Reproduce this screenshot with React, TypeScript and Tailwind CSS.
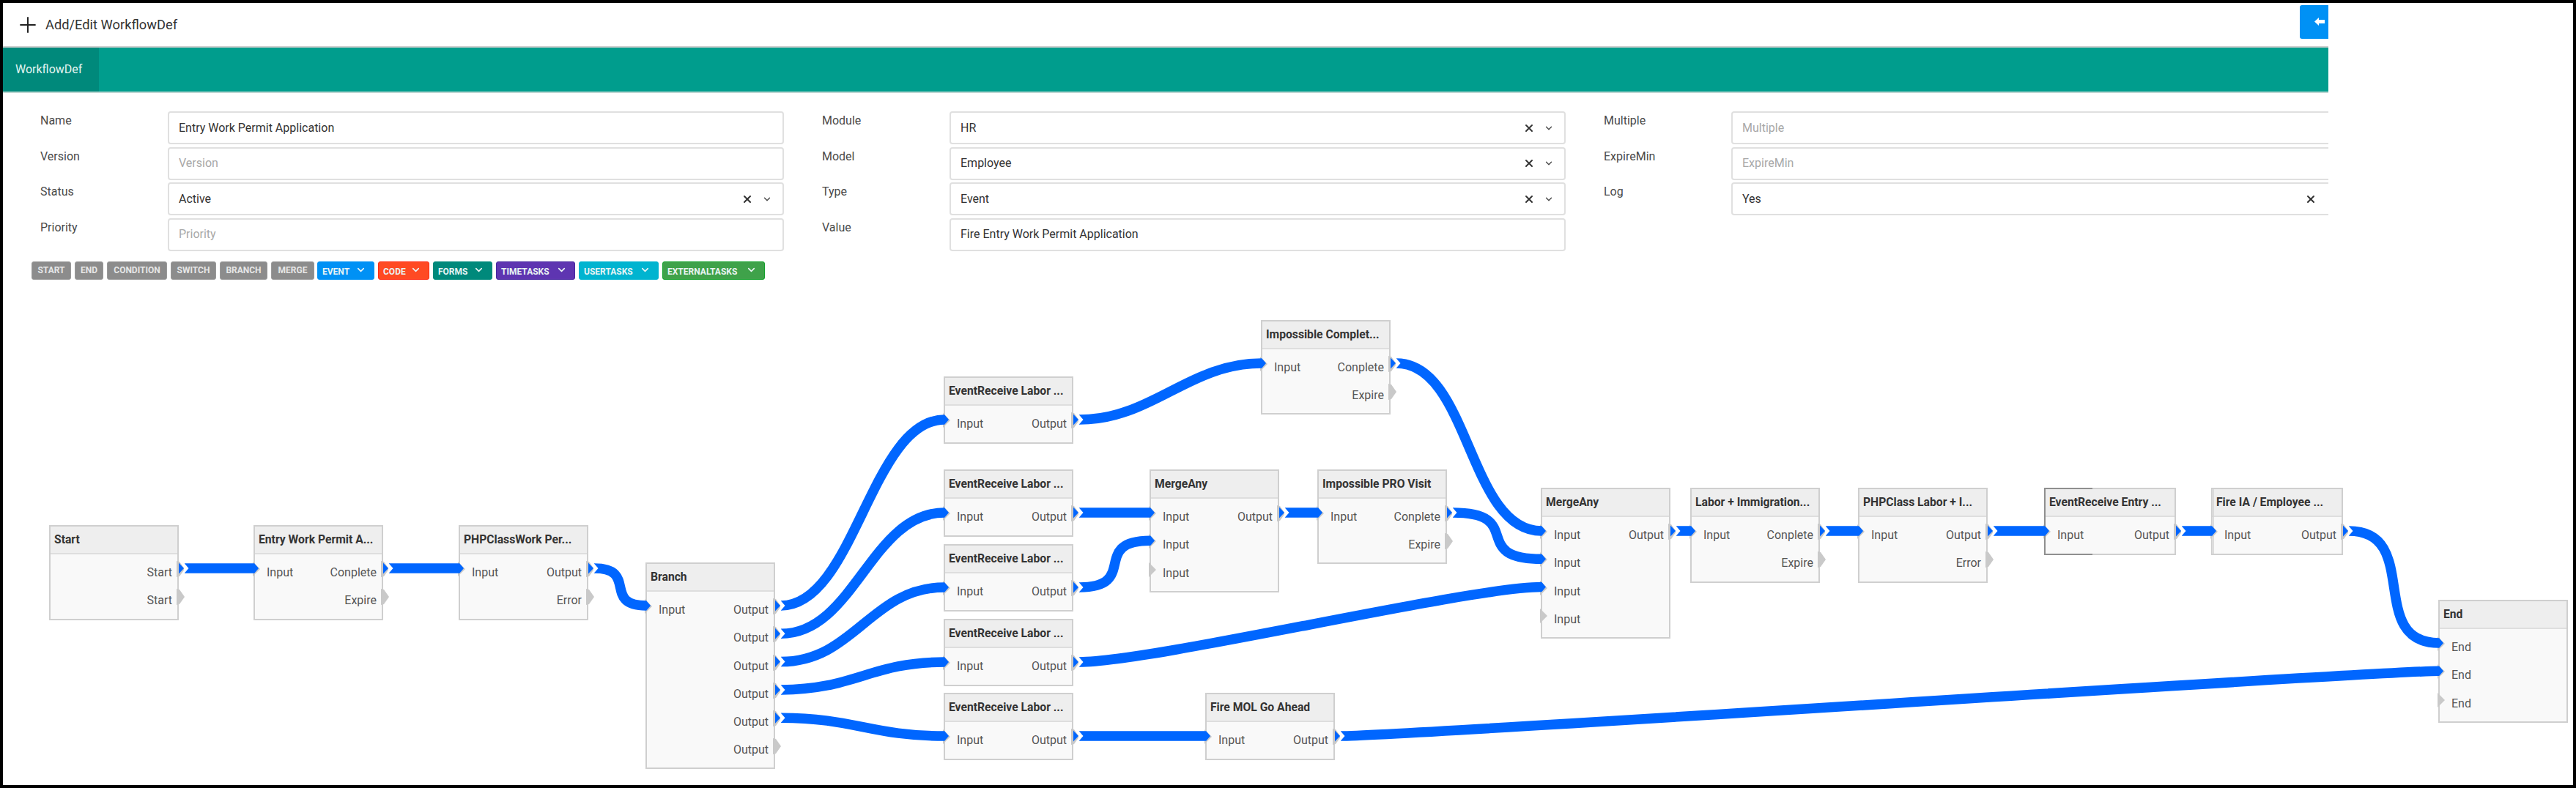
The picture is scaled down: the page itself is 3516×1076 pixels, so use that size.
import { ChevronDown, Plus, X } from "lucide-react";

type N = { id: string; t: string; x: number; y: number; w: number; h: number; i: string[]; o: string[]; sel?: boolean; dbl?: boolean };

const rowH = 38.3;
const canvasY = 400;
const canvasX = 4;

const ev = (id: string, y: number): N => ({ id, t: "EventReceive Labor ...", x: 1288, y, w: 177, h: 92, i: ["Input"], o: ["Output"] });

const nodes: N[] = [
  { id: "start", t: "Start", x: 67, y: 717, w: 177, h: 130, i: [], o: ["Start", "Start"] },
  { id: "entry", t: "Entry Work Permit A...", x: 346, y: 717, w: 177, h: 130, i: ["Input"], o: ["Conplete", "Expire"] },
  { id: "php", t: "PHPClassWork Per...", x: 626, y: 717, w: 177, h: 130, i: ["Input"], o: ["Output", "Error"] },
  { id: "branch", t: "Branch", x: 881, y: 768, w: 177, h: 282, i: ["Input"], o: ["Output", "Output", "Output", "Output", "Output", "Output"] },
  ev("e1", 514),
  ev("e2", 641),
  ev("e3", 743),
  ev("e4", 845),
  ev("e5", 946),
  { id: "ic", t: "Impossible Complet...", x: 1721, y: 437, w: 177, h: 129, i: ["Input"], o: ["Conplete", "Expire"] },
  { id: "m1", t: "MergeAny", x: 1569, y: 641, w: 177, h: 168, i: ["Input", "Input", "Input"], o: ["Output"] },
  { id: "pro", t: "Impossible PRO Visit", x: 1798, y: 641, w: 177, h: 129, i: ["Input"], o: ["Conplete", "Expire"] },
  { id: "mol", t: "Fire MOL Go Ahead", x: 1645, y: 946, w: 177, h: 92, i: ["Input"], o: ["Output"] },
  { id: "m2", t: "MergeAny", x: 2103, y: 666, w: 177, h: 206, i: ["Input", "Input", "Input", "Input"], o: ["Output"] },
  { id: "labor", t: "Labor + Immigration...", x: 2307, y: 666, w: 177, h: 130, i: ["Input"], o: ["Conplete", "Expire"] },
  { id: "phpl", t: "PHPClass Labor + I...", x: 2536, y: 666, w: 177, h: 130, i: ["Input"], o: ["Output", "Error"] },
  { id: "eve", t: "EventReceive Entry ...", x: 2790, y: 666, w: 180, h: 92, i: ["Input"], o: ["Output"], sel: true },
  { id: "fia", t: "Fire IA / Employee ...", x: 3018, y: 666, w: 180, h: 92, i: ["Input"], o: ["Output"], dbl: true },
  { id: "end", t: "End", x: 3328, y: 819, w: 177, h: 168, i: ["End", "End", "End"], o: [] },
];

const edges: [string, number, string, number][] = [
  ["start", 0, "entry", 0],
  ["entry", 0, "php", 0],
  ["php", 0, "branch", 0],
  ["branch", 0, "e1", 0],
  ["branch", 1, "e2", 0],
  ["branch", 2, "e3", 0],
  ["branch", 3, "e4", 0],
  ["branch", 4, "e5", 0],
  ["e1", 0, "ic", 0],
  ["e2", 0, "m1", 0],
  ["e3", 0, "m1", 1],
  ["m1", 0, "pro", 0],
  ["ic", 0, "m2", 0],
  ["pro", 0, "m2", 1],
  ["e4", 0, "m2", 2],
  ["e5", 0, "mol", 0],
  ["m2", 0, "labor", 0],
  ["labor", 0, "phpl", 0],
  ["phpl", 0, "eve", 0],
  ["eve", 0, "fia", 0],
  ["fia", 0, "end", 0],
  ["mol", 0, "end", 1],
];

const byId = Object.fromEntries(nodes.map((n) => [n.id, n]));
const portY = (n: N, i: number) => n.y + 59 + rowH * i;

function Edges() {
  return (
    <svg className="absolute left-0 top-0 pointer-events-none" width={3508} height={672} viewBox={`${canvasX} ${canvasY} 3508 672`}>
      {edges.map(([a, ai, b, bi], k) => {
        const na = byId[a];
        const nb = byId[b];
        const x1 = na.x + na.w + 8;
        const y1 = portY(na, ai);
        const x2 = nb.x + 1;
        const y2 = portY(nb, bi);
        const c = Math.min(100, (x2 - x1) * 0.85);
        return (
          <g key={k}>
            <polygon points={`${na.x + na.w},${y1 - 7.5} ${na.x + na.w + 7},${y1} ${na.x + na.w},${y1 + 7.5}`} fill="#0066ff" />
            <path d={`M${x1} ${y1} C${x1 + c} ${y1} ${x2 - c} ${y2} ${x2} ${y2}`} fill="none" stroke="#0066ff" strokeWidth={13.5} />
            <polygon points={`${x1 - 1},${y1 - 7.5} ${x1 + 5.5},${y1} ${x1 - 1},${y1 + 7.5}`} fill="#ffffff" />
            <polygon points={`${x2},${y2 - 7} ${x2 + 6},${y2} ${x2},${y2 + 7}`} fill="#0066ff" />
          </g>
        );
      })}
    </svg>
  );
}

function Node({ n }: { n: N }) {
  return (
    <div
      className="absolute border-2 border-[#cfcfcf] bg-[#f9f9f9]"
      style={{ left: n.x - canvasX, top: n.y - canvasY, width: n.w, height: n.h }}
    >
      <div className="h-[38px] border-b-2 border-[#dedede] bg-[#eeeeee] px-[5px] text-[15.7px] leading-[36px] font-bold text-[#333] whitespace-nowrap overflow-hidden">
        {n.t}
      </div>
      <div className="flex justify-between pt-[6px] pl-[16px] pr-[7px] text-[16px] text-[#555]">
        <div className="flex flex-col">
          {n.i.map((l, i) => (
            <div key={i} className="h-[38.3px] leading-[38.3px]">{l}</div>
          ))}
        </div>
        <div className="flex flex-col items-end">
          {n.o.map((l, i) => (
            <div key={i} className="h-[38.3px] leading-[38.3px]">{l}</div>
          ))}
        </div>
      </div>
      {n.i.map((_, i) => (
        <svg key={i} className="absolute" style={{ left: -3, top: 60 + rowH * i - 10 - 2 }} width={11} height={20}>
          <polygon points="0,0 10,10 0,20" fill="#c9c9c9" />
        </svg>
      ))}
      {n.o.map((_, i) => (
        <svg key={i} className="absolute" style={{ left: n.w - 5, top: 60 + rowH * i - 11 - 2 }} width={12} height={22}>
          <polygon points="0,0 4,1 11,11 4,21 0,22" fill="#c9c9c9" />
        </svg>
      ))}
      {n.sel && (
        <>
          <div className="absolute left-[-2px] top-[-2px] bottom-[-2px] w-[2px] bg-[#8f8f8f]" />
          <div className="absolute left-[-2px] top-[-2px] h-[2px] w-[66px] bg-[#8f8f8f]" />
          <div className="absolute left-[-2px] bottom-[-2px] h-[2px] w-[66px] bg-[#8f8f8f]" />
        </>
      )}
      {n.dbl && <div className="absolute left-[1px] top-0 bottom-0 w-[1px] bg-[#d4d4d4]" />}
    </div>
  );
}

function Field({ label, value, placeholder, select, clear }: { label: string; value?: string; placeholder?: string; select?: boolean; clear?: boolean }) {
  return (
    <div className="flex h-[45px]">
      <div className="w-[174px] shrink-0 pt-[1px] text-[16px] leading-[24px] text-[#4a4a4a]">{label}</div>
      <div className="flex h-[45px] w-[841px] shrink-0 items-center rounded-[4px] border-2 border-[#e0e0e0] bg-white pl-[13px] text-[16px] text-[#333]">
        {select || clear ? (
          <>
            <span className="flex-1">{value}</span>
            <X size={16} strokeWidth={3} className="text-[#333]" />
            {select ? <ChevronDown size={14} strokeWidth={2.2} className="ml-[12px] mr-[14px] text-[#444]" /> : <span className="w-[40px]" />}
          </>
        ) : (
          <input
            readOnly
            value={value ?? ""}
            placeholder={placeholder}
            className="w-full bg-transparent outline-none placeholder:text-[#a8a8a8]"
          />
        )}
      </div>
    </div>
  );
}

const plain = [
  { t: "START", w: 54 },
  { t: "END", w: 39 },
  { t: "CONDITION", w: 82 },
  { t: "SWITCH", w: 62 },
  { t: "BRANCH", w: 65 },
  { t: "MERGE", w: 59 },
];

function Tool({ t, className }: { t: string; className: string }) {
  return (
    <div className={`flex h-[25px] items-start justify-between rounded-[3px] border pl-[6px] pr-[10px] text-[12px] font-bold text-[#eaf4f4] ${className}`}>
      <span className="pt-[6px] leading-[14px]">{t}</span>
      <ChevronDown size={15} strokeWidth={2.6} className="mt-[3px]" />
    </div>
  );
}

export default function App() {
  return (
    <div className="relative flex h-[1076px] w-[3516px] flex-col overflow-hidden border-4 border-black bg-white font-[Roboto,sans-serif]">
      <div className="w-[3174px] shrink-0 overflow-hidden">
        <div className="flex h-[59px] items-center pl-[17px]">
          <Plus size={34} strokeWidth={1.4} className="text-[#222]" />
          <span className="ml-[7px] text-[18.3px] text-[#333]">Add/Edit WorkflowDef</span>
          <div className="ml-auto mb-[8px] flex h-[46px] w-[39px] items-center justify-end rounded-l-[3px] bg-[#0091f5] pr-[5px]">
            <svg width="14" height="11" viewBox="0 0 14 11">
              <polygon points="0,5.5 6,0 6,3 14,3 14,8 6,8 6,11" fill="#ffffff" />
            </svg>
          </div>
        </div>
        <div className="flex h-[64px] border-y-2 border-t-[#cfcfcf] border-b-[#bcd6d2] bg-[#009d8d]">
          <div className="flex w-[131px] items-center bg-[#00897b] pl-[17px] text-[16px] text-[#e4f5f2]">WorkflowDef</div>
        </div>
        <div className="flex gap-[52px] pl-[51px] pt-[25px] w-[3300px]">
          <div className="flex flex-col gap-[3.67px]">
            <Field label="Name" value="Entry Work Permit Application" />
            <Field label="Version" placeholder="Version" />
            <Field label="Status" value="Active" select />
            <Field label="Priority" placeholder="Priority" />
          </div>
          <div className="flex flex-col gap-[3.67px]">
            <Field label="Module" value="HR" select />
            <Field label="Model" value="Employee" select />
            <Field label="Type" value="Event" select />
            <Field label="Value" value="Fire Entry Work Permit Application" />
          </div>
          <div className="flex flex-col gap-[3.67px]">
            <Field label="Multiple" placeholder="Multiple" />
            <Field label="ExpireMin" placeholder="ExpireMin" />
            <Field label="Log" value="Yes" clear />
          </div>
        </div>
        <div className="mt-[14px] flex pl-[39px]">
          <div className="flex gap-[5px]">
            {plain.map((b) => (
              <div
                key={b.t}
                className="flex h-[25px] items-center justify-center rounded-[3px] border border-[#9a9a9a] bg-[#8c8c8c] text-[12px] font-bold text-[#e6e6e6]"
                style={{ width: b.w }}
              >
                {b.t}
              </div>
            ))}
          </div>
          <div className="ml-[4px] flex gap-[5px]">
            <div className="w-[78px]"><Tool t="EVENT" className="border-[#0091f5] bg-[#0091f5]" /></div>
            <div className="w-[70px]"><Tool t="CODE" className="border-[#ff2a12] bg-[#ff4a23]" /></div>
            <div className="w-[81px]"><Tool t="FORMS" className="border-[#00897b] bg-[#00897b]" /></div>
            <div className="w-[108px]"><Tool t="TIMETASKS" className="border-[#4527a0] bg-[#5e35b1]" /></div>
            <div className="w-[109px]"><Tool t="USERTASKS" className="border-[#00b4d0] bg-[#00b4d0]" /></div>
            <div className="w-[140px]"><Tool t="EXTERNALTASKS" className="border-[#12a02a] bg-[#3fa24a]" /></div>
          </div>
        </div>
      </div>
      <div className="relative mt-[18px] flex-1">
        {nodes.map((n) => (
          <Node key={n.id} n={n} />
        ))}
        <Edges />
      </div>
    </div>
  );
}
